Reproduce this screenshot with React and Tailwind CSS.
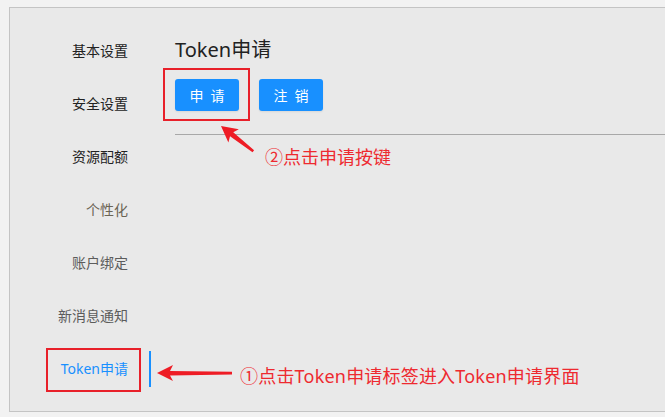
import React from "react";

const font = { fontFamily: '"Noto Sans", "Noto Sans CJK SC", sans-serif' };

const navItems = [
  { label: "基本设置", color: "text-[#222222]" },
  { label: "安全设置", color: "text-[#222222]" },
  { label: "资源配额", color: "text-[#222222]" },
  { label: "个性化", color: "text-[#6b6455]" },
  { label: "账户绑定", color: "text-[#5c5c5c]" },
  { label: "新消息通知", color: "text-[#5c5c5c]" },
  { label: "Token申请", color: "text-[#1890ff]", active: true },
];

export default function App() {
  return (
    <div
      className="relative w-[665px] h-[417px] overflow-hidden bg-[#f2f2f2] pl-[9px] pt-[7px]"
      style={font}
    >
      <div className="flex h-[405px] border-l border-t border-b border-[#c4c4c4] bg-[#e9e9e9]">
        {/* Sidebar */}
        <div className="w-[141px] shrink-0 pt-[16px] flex flex-col">
          {navItems.map((it) => (
            <div
              key={it.label}
              className="relative h-[53px] flex items-center justify-end gap-[21px]"
            >
              <span className={`text-[14px] leading-none ${it.color}`}>{it.label}</span>
              <div
                className={
                  it.active
                    ? "w-[2px] h-[36px] bg-[#1890ff]"
                    : "w-[2px] h-[36px] bg-transparent"
                }
              />
              {it.active && (
                <div className="absolute left-[36px] top-[6px] w-[95px] h-[44px] border-2 border-[#e8202a]" />
              )}
            </div>
          ))}
        </div>

        {/* Main */}
        <div className="flex-1 pt-[28px]">
          <div className="pl-[24px] text-[20px] leading-[28px] text-[#222222]">Token申请</div>
          <div className="pl-[24px] mt-[15px] flex gap-[20px]">
            <div className="relative">
              <button className="w-[64px] h-[32px] rounded-[3px] bg-[#1890ff] text-white text-[14px] flex items-center justify-center gap-[7px] shadow-[0_1px_2px_rgba(0,0,0,0.08)]">
                <span>申</span>
                <span>请</span>
              </button>
              <div className="absolute left-[-12px] top-[-11px] w-[87px] h-[53px] border-2 border-[#e8202a]" />
            </div>
            <button className="w-[64px] h-[32px] rounded-[3px] bg-[#1890ff] text-white text-[14px] flex items-center justify-center gap-[7px] shadow-[0_1px_2px_rgba(0,0,0,0.08)]">
              <span>注</span>
              <span>销</span>
            </button>
          </div>
          <div className="ml-[24px] mt-[23px] border-t border-[#a8a8a8]" />
        </div>
      </div>

      {/* Annotations */}
      <svg
        className="absolute left-0 top-0 pointer-events-none"
        width="665"
        height="417"
        viewBox="0 0 665 417"
      >
        <polygon
          points="157,373 173,365 170,371 232,371.8 232,374.6 170,375.5 173,381"
          fill="#ee1c25"
        />
        <g transform="translate(221,126) rotate(38)">
          <polygon
            points="0,0 16,-8.5 13.5,-2.6 41,-1.3 41,1.3 13.5,2.6 16,8.5"
            fill="#ee1c25"
          />
        </g>
      </svg>
      <div className="absolute left-[265px] top-[146px] text-[18px] leading-[22px] text-[#ee2a30] whitespace-nowrap">
        ②点击申请按键
      </div>
      <div className="absolute left-[240px] top-[365px] text-[18px] leading-[22px] text-[#ee2a30] whitespace-nowrap tracking-[0.2px]">
        ①点击Token申请标签进入Token申请界面
      </div>
    </div>
  );
}
